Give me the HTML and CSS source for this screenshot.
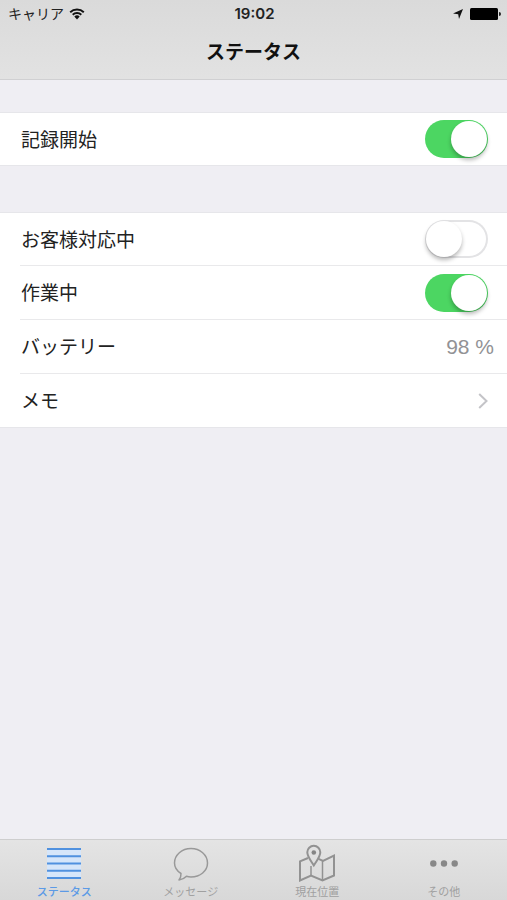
FILE: index.html
```html
<!DOCTYPE html>
<html lang="ja">
<head>
<meta charset="utf-8">
<meta name="viewport" content="width=device-width, initial-scale=1">
<title>ステータス</title>
<link rel="stylesheet" href="styles.css">
</head>
<body>
<header class="header">
  <div class="statusbar">
    <div class="carrier">
      <span>キャリア</span>
      <svg class="wifi" viewBox="0 0 16 12" width="16" height="12" aria-hidden="true">
        <path d="M1.2 4.2a9.8 9.8 0 0 1 13.6 0M3.7 6.8a6.2 6.2 0 0 1 8.600 0" fill="none" stroke="#111" stroke-width="1.9"/>
        <path d="M5.3 8.6a4 4 0 0 1 5.4 0L8 11.4z" fill="#111"/>
      </svg>
    </div>
    <time class="clock">19:02</time>
    <div class="indicators">
      <svg viewBox="0 0 10 10" width="10" height="10" aria-hidden="true"><path d="M10 0 6 10 5.2 5.2 0 4.4z" fill="#111"/></svg>
      <svg viewBox="0 0 31 12" width="31" height="12" aria-hidden="true"><rect width="28" height="12" rx="1.5"/><path d="M29 4a2 2 0 0 1 0 4z" fill="#222"/></svg>
    </div>
  </div>
  <h1 class="title">ステータス</h1>
</header>

<main class="content">
  <section class="group">
    <label class="row"><span class="name">記録開始</span><input class="switch" type="checkbox" role="switch" checked></label>
  </section>
  <section class="group">
    <label class="row"><span class="name">お客様対応中</span><input class="switch" type="checkbox" role="switch"></label>
    <label class="row"><span class="name">作業中</span><input class="switch" type="checkbox" role="switch" checked></label>
    <div class="row"><span class="name">バッテリー</span><span class="value">98 %</span></div>
    <a class="row" href="#memo"><span class="name">メモ</span>
      <svg class="chevron" viewBox="0 0 10 16" width="10" height="16" aria-hidden="true"><path d="m1.2 1 7.3 7-7.3 7" fill="none" stroke="#c4c4c8" stroke-width="2"/></svg>
    </a>
  </section>
</main>

<nav class="tabs">
  <a class="tab active" href="#status" aria-current="page">
    <svg viewBox="0 0 36 38" width="36" height="38" aria-hidden="true"><path fill="#d6e6fa" d="M1 4h34v30H1z"/><path d="M1 5h34M1 12.200h34M1 19.400h34M1 26.700h34M1 34h34" stroke="#5091df" stroke-width="2"/></svg>
    <span>ステータス</span>
  </a>
  <a class="tab" href="#messages">
    <svg viewBox="0 0 36 38" width="36" height="38" aria-hidden="true"><path d="M8 29.500C4 27 1.500 23.300 1.500 19 1.500 11 8.900 4.500 18 4.500S34.500 11 34.500 19 27.100 33 18 33q-2.300 0-4.500-.7Q10.500 35.500 6 36 8.200 33 8 29.500z" fill="none" stroke="#999" stroke-width="1.500" stroke-linejoin="round"/></svg>
    <span>メッセージ</span>
  </a>
  <a class="tab" href="#location">
    <svg viewBox="0 0 36 38" width="36" height="38" aria-hidden="true">
      <g fill="none" stroke="#929292" stroke-width="2">
        <path d="M9 14 1 17.300V36.500l11-5 11.500 5L35 31.500V11.500l-11 5.300-4.500-2"/>
        <path d="M12 22v9M23.500 17v19" stroke-width="1.500"/>
        <path d="M14.800 21.500C11 15.500 8.300 12.400 8.300 8.300a6.500 6.500 0 0 1 13 0c0 4.100-2.700 7.200-6.500 13.200z"/>
      </g>
      <circle cx="14.800" cy="8.500" r="2.300" fill="#858585"/>
    </svg>
    <span>現在位置</span>
  </a>
  <a class="tab" href="#other">
    <svg viewBox="0 0 36 38" width="36" height="38" aria-hidden="true"><g fill="#888"><circle cx="7.300" cy="19.500" r="3.200"/><circle cx="18" cy="19.500" r="3.200"/><circle cx="28.700" cy="19.500" r="3.200"/></g></svg>
    <span>その他</span>
  </a>
</nav>
</body>
</html>
```
FILE: styles.css
```css
* {
  box-sizing: border-box;
}

body {
  margin: 0;
  min-height: 100vh;
  display: flex;
  flex-direction: column;
  background: #efeef3;
  color: #222;
  font-family: Inter, "Noto Sans CJK JP", sans-serif;
}

a {
  color: inherit;
  text-decoration: none;
}

svg {
  display: block;
}

.header {
  background: linear-gradient(#dadada, #e2e2e2);
  border-bottom: 1px solid #d0d0d2;
}

.statusbar {
  display: grid;
  grid-template-columns: 1fr auto 1fr;
  align-items: center;
  height: 27px;
  padding: 0 6px 0 8px;
  line-height: 20px;
}

.carrier,
.indicators {
  display: flex;
  align-items: center;
  gap: 5px;
}

.carrier {
  font-size: 14px;
  font-weight: 400;
}

.indicators {
  justify-content: flex-end;
  gap: 7px;
}

.clock {
  font-size: 15px;
  font-weight: 600;
}

.title {
  margin: 0;
  height: 52px;
  font-size: 19px;
  font-weight: 700;
  line-height: 52px;
  text-align: center;
  color: #111;
}

.content {
  flex: 1;
}

.group {
  margin-top: 32px;
  background: #fff;
  border-top: 1px solid #e6e6ea;
  border-bottom: 1px solid #e6e6ea;
}

.group + .group {
  margin-top: 46px;
}

.row {
  display: flex;
  align-items: center;
  justify-content: space-between;
  height: 52px;
  margin-left: 20px;
  padding: 0 19px 0 1px;
}

.row + .row {
  height: 54px;
  border-top: 1px solid #e9e9eb;
}

.name {
  padding-top: 3px;
  font-size: 19px;
  line-height: 28px;
}

.value {
  margin-right: -6px;
  font-size: 21px;
  font-family: "Liberation Sans", sans-serif;
  color: #929295;
}

.switch {
  appearance: none;
  display: flex;
  width: 63px;
  height: 38px;
  margin: 0;
  padding: 1px;
  border-radius: 19px;
  background: #fff;
  box-shadow: inset 0 0 0 2px #e3e3e5;
}

.switch::before {
  content: "";
  width: 36px;
  height: 36px;
  border-radius: 50%;
  background: #fff;
  box-shadow: 0 3px 4px rgba(0, 0, 0, 0.28);
}

.switch:checked {
  justify-content: flex-end;
  background: #4cd662;
  box-shadow: none;
}

.tabs {
  display: grid;
  grid-template-columns: repeat(4, 1fr);
  height: 61px;
  padding: 4px 0 0 1px;
  background: linear-gradient(#e4e4e4, #d8d8d8);
  border-top: 1px solid #cecece;
}

.tab {
  display: flex;
  flex-direction: column;
  align-items: center;
  color: #a0a0a0;
  font-size: 11px;
  line-height: 20px;
}

.active {
  color: #5c9ae6;
  font-weight: 500;
}
```
